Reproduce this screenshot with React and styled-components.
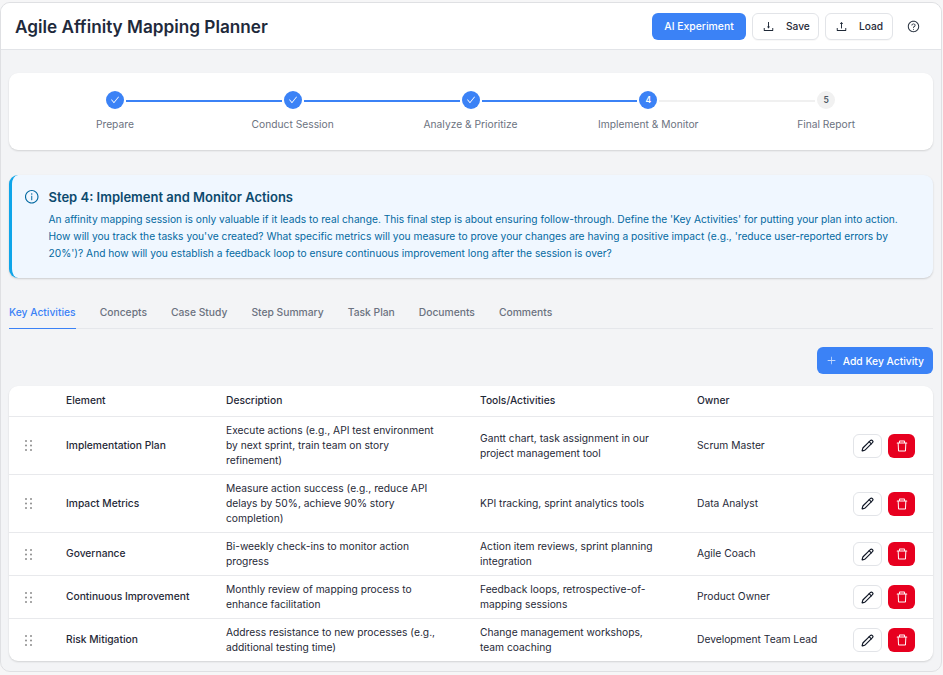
import React from 'react';
import styled, { createGlobalStyle } from 'styled-components';
import {
	AiOutlineCheck,
	AiOutlineDelete,
	AiOutlineDownload,
	AiOutlineUpload,
	AiOutlineQuestionCircle,
	AiOutlineInfoCircle,
	AiOutlinePlus,
} from 'react-icons/ai';
import { Pencil } from 'lucide-react';

const GlobalStyle = createGlobalStyle`
	html, body {
		margin: 0;
		padding: 0;
		background: #f6f6f7;
	}
	* {
		box-sizing: border-box;
	}
	body {
		font-family: Inter, 'Liberation Sans', sans-serif;
		color: #1f2937;
		-webkit-font-smoothing: antialiased;
	}
`;

const steps = [
	{ label: 'Prepare', state: 'done' },
	{ label: 'Conduct Session', state: 'done' },
	{ label: 'Analyze & Prioritize', state: 'done' },
	{ label: 'Implement & Monitor', state: 'current', num: 4 },
	{ label: 'Final Report', state: 'todo', num: 5 },
];

const tabs = ['Key Activities', 'Concepts', 'Case Study', 'Step Summary', 'Task Plan', 'Documents', 'Comments'];

const rows = [
	{
		element: 'Implementation Plan',
		description: 'Execute actions (e.g., API test environment by next sprint, train team on story refinement)',
		tools: 'Gantt chart, task assignment in our project management tool',
		owner: 'Scrum Master',
	},
	{
		element: 'Impact Metrics',
		description: 'Measure action success (e.g., reduce API delays by 50%, achieve 90% story completion)',
		tools: 'KPI tracking, sprint analytics tools',
		owner: 'Data Analyst',
	},
	{
		element: 'Governance',
		description: 'Bi-weekly check-ins to monitor action progress',
		tools: 'Action item reviews, sprint planning integration',
		owner: 'Agile Coach',
	},
	{
		element: 'Continuous Improvement',
		description: 'Monthly review of mapping process to enhance facilitation',
		tools: 'Feedback loops, retrospective-of-mapping sessions',
		owner: 'Product Owner',
	},
	{
		element: 'Risk Mitigation',
		description: 'Address resistance to new processes (e.g., additional testing time)',
		tools: 'Change management workshops, team coaching',
		owner: 'Development Team Lead',
	},
];

const GripIcon = () => (
	<svg width="7" height="11" viewBox="0 0 7 11" fill="#8c8c8c">
		{[1, 5.5, 10].map((y) => (
			<React.Fragment key={y}>
				<circle cx="1" cy={y} r="1" />
				<circle cx="6" cy={y} r="1" />
			</React.Fragment>
		))}
	</svg>
);

const App = () => {
	return (
		<>
			<GlobalStyle />
			<Frame>
				<Header>
					<Title>Agile Affinity Mapping Planner</Title>
					<HeaderActions>
						<PrimaryButton>AI Experiment</PrimaryButton>
						<OutlineButton $width={67}>
							<AiOutlineDownload />
							Save
						</OutlineButton>
						<OutlineButton $width={68}>
							<AiOutlineUpload />
							Load
						</OutlineButton>
						<HelpButton>
							<AiOutlineQuestionCircle />
						</HelpButton>
					</HeaderActions>
				</Header>
				<Content>
					<StepperCard>
						{steps.map((step, i) => (
							<Step key={step.label}>
								<StepTrack>
									<Connector $side="left" $hidden={i === 0} $active={step.state !== 'todo'} />
									<StepDot $state={step.state}>{step.state === 'done' ? <AiOutlineCheck /> : step.num}</StepDot>
									<Connector $side="right" $hidden={i === steps.length - 1} $active={step.state === 'done'} />
								</StepTrack>
								<StepLabel>{step.label}</StepLabel>
							</Step>
						))}
					</StepperCard>

					<Notice>
						<NoticeIcon>
							<AiOutlineInfoCircle />
						</NoticeIcon>
						<div>
							<NoticeTitle>Step 4: Implement and Monitor Actions</NoticeTitle>
							<NoticeText>
								An affinity mapping session is only valuable if it leads to real change. This final step is about ensuring
								follow-through. Define the 'Key Activities' for putting your plan into action. How will you track the tasks
								you've created? What specific metrics will you measure to prove your changes are having a positive impact
								(e.g., 'reduce user-reported errors by 20%')? And how will you establish a feedback loop to ensure
								continuous improvement long after the session is over?
							</NoticeText>
						</div>
					</Notice>

					<TabBar>
						{tabs.map((tab, i) => (
							<Tab key={tab} $active={i === 0}>
								{tab}
							</Tab>
						))}
					</TabBar>

					<Toolbar>
						<AddButton>
							<AiOutlinePlus />
							Add Key Activity
						</AddButton>
					</Toolbar>

					<TableCard>
						<HeadRow>
							<span />
							<span>Element</span>
							<span>Description</span>
							<span>Tools/Activities</span>
							<span>Owner</span>
							<span />
						</HeadRow>
						{rows.map((row) => (
							<Row key={row.element}>
								<Grip>
									<GripIcon />
								</Grip>
								<ElementName>{row.element}</ElementName>
								<Description>{row.description}</Description>
								<Tools>{row.tools}</Tools>
								<Owner>{row.owner}</Owner>
								<RowActions>
									<EditButton>
										<Pencil size={13} strokeWidth={2.1} />
									</EditButton>
									<DeleteButton>
										<AiOutlineDelete />
									</DeleteButton>
								</RowActions>
							</Row>
						))}
					</TableCard>
				</Content>
			</Frame>
		</>
	);
};

export default App;

const Frame = styled.div`
	width: 942px;
	height: 670px;
	margin-top: 2px;
	background: #f3f4f6;
	border: 1px solid #dfe0e3;
	border-radius: 10px;
	overflow: hidden;
`;

const Header = styled.header`
	height: 47px;
	display: flex;
	align-items: center;
	justify-content: space-between;
	padding: 0 14px;
	background: #fff;
	border-bottom: 1px solid #e2e4e8;
`;

const Title = styled.h1`
	margin: 0;
	font-size: 17.2px;
	font-weight: 600;
	color: #1e293b;
`;

const HeaderActions = styled.div`
	display: flex;
	align-items: center;
	gap: 6px;
`;

const PrimaryButton = styled.button`
	height: 27px;
	width: 94px;
	border: none;
	border-radius: 6px;
	background: #3b82f6;
	color: #fff;
	font: 500 10.4px Inter, sans-serif;
`;

const OutlineButton = styled.button`
	height: 27px;
	width: ${({ $width }) => $width}px;
	padding: 0 0 0 9px;
	display: flex;
	align-items: center;
	gap: 11px;
	border: 1px solid #e2e4e8;
	border-radius: 6px;
	background: #fff;
	color: #1f2937;
	font: 500 10.2px Inter, sans-serif;
	box-shadow: 0 1px 1px rgba(0, 0, 0, 0.03);

	svg {
		font-size: 13px;
	}
`;

const HelpButton = styled.button`
	width: 28px;
	height: 27px;
	display: flex;
	align-items: center;
	justify-content: center;
	border: none;
	background: none;
	color: #1f2937;
	font-size: 13px;
	padding: 0;
`;

const Content = styled.main`
	padding: 23px 8px 0 8px;
`;

const StepperCard = styled.section`
	height: 77px;
	display: grid;
	grid-template-columns: repeat(5, 1fr);
	padding: 18px 18px 0 17px;
	background: #fff;
	border-radius: 9px;
	box-shadow: 0 1px 2px rgba(0, 0, 0, 0.14);
`;

const Step = styled.div`
	display: flex;
	flex-direction: column;
	align-items: center;
`;

const StepTrack = styled.div`
	width: 100%;
	height: 18px;
	display: flex;
	align-items: center;
`;

const Connector = styled.div`
	flex: 1;
	height: 2px;
	margin-top: 1px;
	margin-${({ $side }) => ($side === 'left' ? 'right' : 'left')}: 2px;
	background: ${({ $hidden, $active }) => ($hidden ? 'transparent' : $active ? '#3b82f6' : '#f0f0f0')};
`;

const StepDot = styled.div`
	width: 18px;
	height: 18px;
	flex: none;
	display: flex;
	align-items: center;
	justify-content: center;
	border-radius: 50%;
	font-size: 8.5px;
	font-weight: 600;
	background: ${({ $state }) => ($state === 'todo' ? '#f1f1f1' : '#3b82f6')};
	color: ${({ $state }) => ($state === 'todo' ? '#4b5563' : '#fff')};

	svg {
		font-size: 10px;
	}
`;

const StepLabel = styled.div`
	margin-top: 9px;
	font-size: 10.25px;
	color: #6b7280;
`;

const Notice = styled.section`
	height: 103px;
	margin-top: 25px;
	display: flex;
	gap: 9px;
	padding: 14px 28px 0 12px;
	background: #f0f7ff;
	border-left: 3px solid #0ea5e9;
	border-radius: 9px;
	box-shadow: 0 1px 2px rgba(0, 0, 0, 0.16);
`;

const NoticeIcon = styled.div`
	color: #0369a1;
	font-size: 15.5px;
	line-height: 1;
`;

const NoticeTitle = styled.h2`
	margin: 0 0 6px;
	font-size: 13px;
	font-weight: 600;
	line-height: 16px;
	color: #0c4a6e;
`;

const NoticeText = styled.p`
	margin: 0;
	font-size: 10.22px;
	line-height: 17px;
	color: #0369a1;
`;

const TabBar = styled.nav`
	margin-top: 23px;
	height: 28px;
	display: flex;
	gap: 24px;
	border-bottom: 1px solid #e5e7eb;
`;

const Tab = styled.div`
	height: 28px;
	font-size: 10.3px;
	font-weight: 500;
	line-height: 23px;
	color: ${({ $active }) => ($active ? '#3b82f6' : '#6b7280')};
	border-bottom: 1px solid ${({ $active }) => ($active ? '#3b82f6' : 'transparent')};
`;

const Toolbar = styled.div`
	margin-top: 18px;
	display: flex;
	justify-content: flex-end;
`;

const AddButton = styled.button`
	height: 27px;
	padding: 0 9px;
	display: flex;
	align-items: center;
	gap: 6px;
	border: none;
	border-radius: 6px;
	background: #3b82f6;
	color: #fff;
	font: 500 10.3px Inter, sans-serif;

	svg {
		font-size: 11px;
		opacity: 0.7;
	}
`;

const TableCard = styled.section`
	margin-top: 12px;
	background: #fff;
	border-radius: 9px;
	box-shadow: 0 1px 2px rgba(0, 0, 0, 0.14);
	overflow: hidden;
	font-size: 10.25px;
	line-height: 15px;
	color: #1f2937;
`;

const columns = '57px 160px 254px 217px 1fr 80px';

const HeadRow = styled.div`
	display: grid;
	grid-template-columns: ${columns};
	height: 31px;
	padding-bottom: 2px;
	align-items: center;
	font-weight: 500;
	border-bottom: 1px solid #e8e9ec;
`;

const Row = styled.div`
	display: grid;
	grid-template-columns: ${columns};
	align-items: center;
	padding: 6px 0;
	border-bottom: 1px solid #e8e9ec;

	&:last-child {
		border-bottom: none;
	}
`;

const Grip = styled.div`
	display: flex;
	justify-content: center;
	padding-right: 19px;
`;

const ElementName = styled.span`
	font-weight: 500;
	margin-top: -1px;
`;

const Description = styled.span`
	padding-right: 42px;
`;

const Tools = styled.span`
	padding-right: 37px;
`;

const Owner = styled.span`
	margin-top: -1px;
`;

const RowActions = styled.div`
	display: flex;
	gap: 6px;
`;

const EditButton = styled.button`
	width: 29px;
	height: 24px;
	display: flex;
	align-items: center;
	justify-content: center;
	border: 1px solid #e2e4e8;
	border-radius: 6px;
	background: #fff;
	color: #111827;
	padding: 0;
`;

const DeleteButton = styled(EditButton)`
	width: 27px;
	border: none;
	background: #e7001f;
	color: #fff;
	font-size: 14px;
`;
